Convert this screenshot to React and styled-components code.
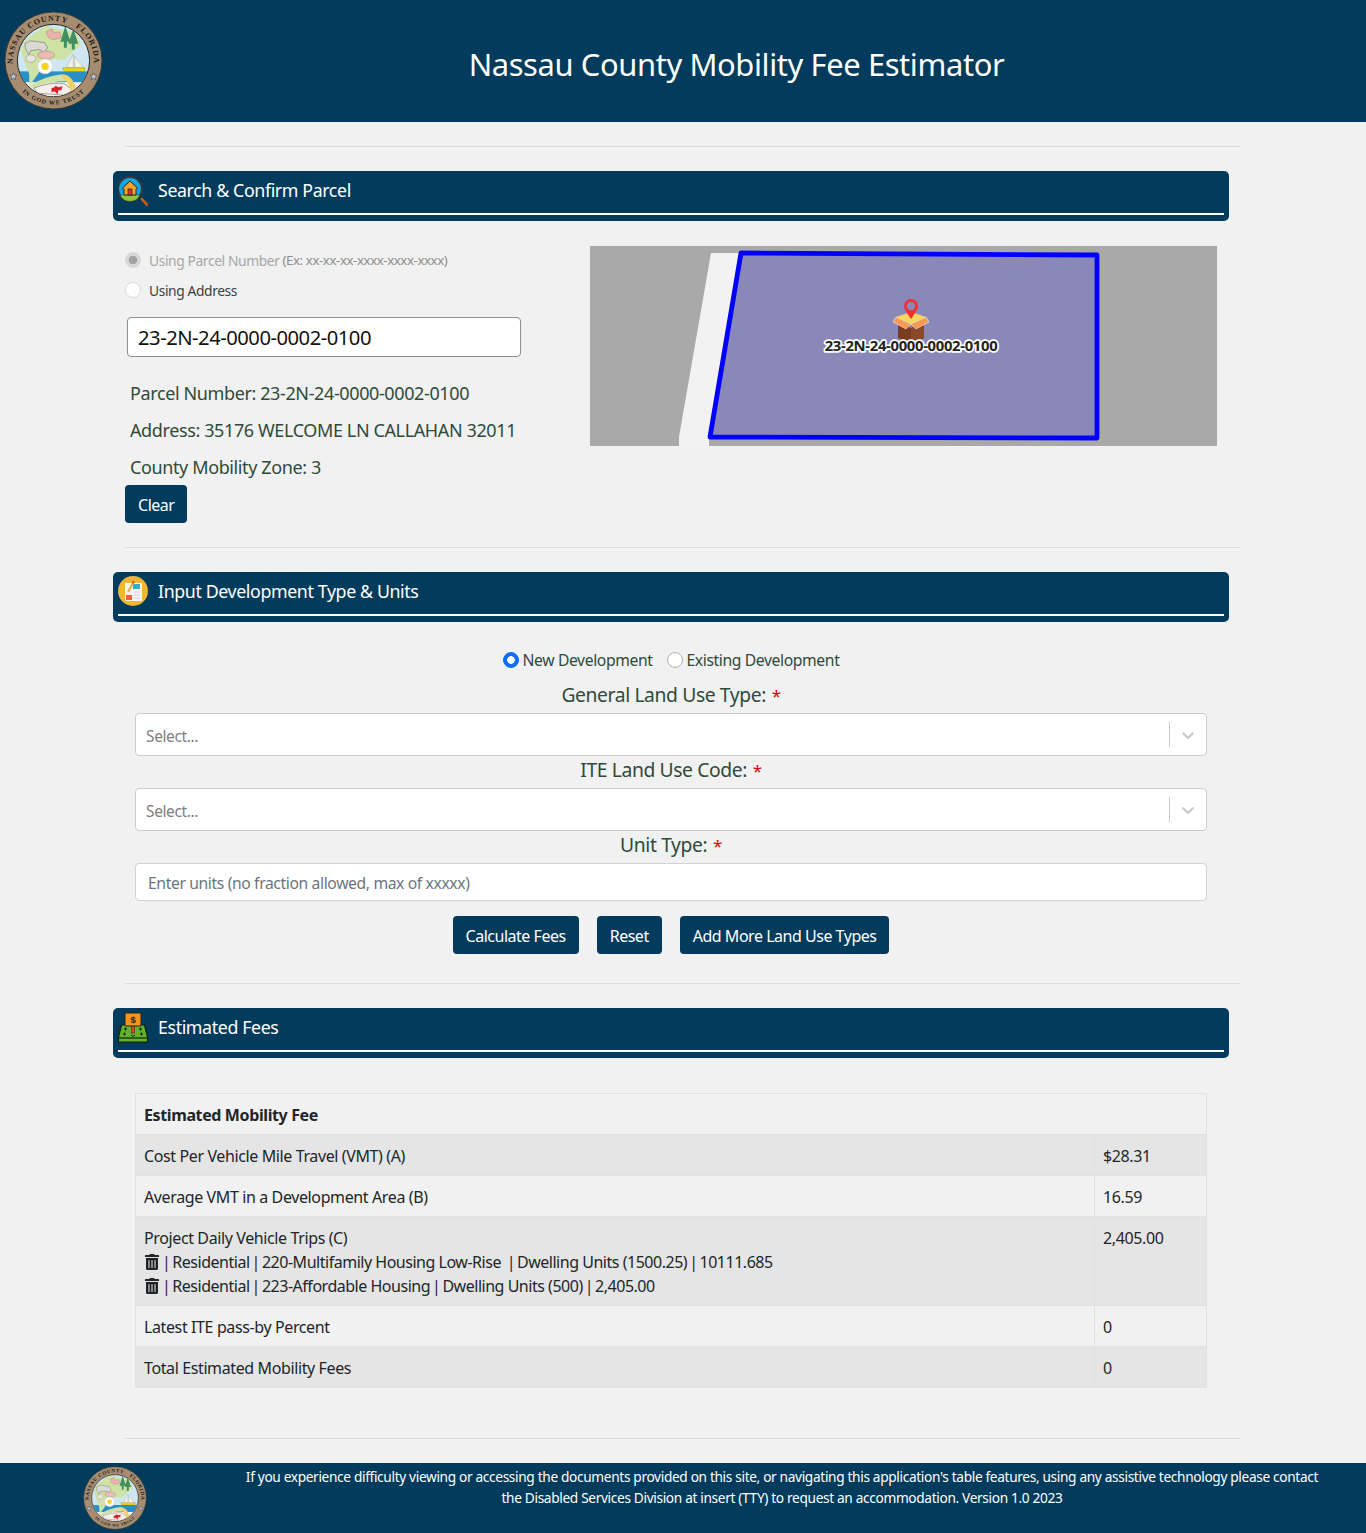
import React from 'react';
import styled, { createGlobalStyle } from 'styled-components';
import { FaTrashAlt } from 'react-icons/fa';

const NAVY = '#033b5c';
const FONT = '"Noto Sans", "Open Sans", sans-serif';

const GlobalStyle = createGlobalStyle`
  html, body {
    margin: 0;
    padding: 0;
    background: #f1f1f1;
    font-family: ${FONT};
    font-size: 16px;
    letter-spacing: -0.024em;
    color: #212529;
  }
  * { box-sizing: border-box; }
`;

const Header = styled.header`
  height: 122px;
  background: ${NAVY};
  display: flex;
  align-items: center;
  padding: 0 0 0 4px;
`;

const HeaderSeal = styled.div`
  width: 99px;
  height: 99px;
  margin-top: -1px;
`;

const Title = styled.h1`
  flex: 1;
  margin: 5px 0 0 4px;
  text-align: center;
  color: #fff;
  font-size: 30.9px;
  font-weight: 400;
  line-height: 40px;
`;

const Main = styled.main`
  width: 1115px;
  margin-left: 125px;
`;

const Rule = styled.hr`
  margin: 24px 0;
  height: 1px;
  border: 0;
  background: #dcdcdc;
`;

const Bar = styled.div`
  width: 1116px;
  height: 50px;
  margin-left: -12px;
  padding: 0 5px;
  background: ${NAVY};
  border-radius: 5px;
  display: flex;
  flex-direction: column;
`;

const BarRow = styled.div`
  height: 38px;
  margin-bottom: 4px;
  display: flex;
  align-items: center;
  gap: 10px;
  color: #fff;
  font-size: 17.8px;
`;

const BarIcon = styled.svg`
  width: 30px;
  height: 32px;
  flex: none;
`;

const BarLine = styled.div`
  height: 2px;
  background: #fff;
`;

const ParcelGrid = styled.div`
  display: flex;
  justify-content: space-between;
  width: 1092px;
  margin-top: 25px;
`;

const ParcelForm = styled.div`
  width: 400px;
  margin-top: -1px;
`;

const RadioRow = styled.label`
  display: flex;
  align-items: center;
  height: 30px;
  font-size: 13.8px;
  color: ${p => (p.$muted ? '#a6a6a6' : '#3a3f44')};
`;

const RadioInput = styled.input`
  appearance: none;
  width: 16px;
  height: 16px;
  margin: 0 8px 0 0;
  border-radius: 50%;
  border: 1px solid #d9dcdf;
  background: #fff;
  flex: none;

  &:checked {
    background: radial-gradient(circle, #fff 0 3.6px, transparent 4px), #0d6efd;
    border-color: #0d6efd;
  }
  &:disabled:checked {
    background: radial-gradient(circle, #a3a3a3 0 4px, #d8d8d8 4.6px);
    border-color: #d8d8d8;
  }
`;

const Hint = styled.span`
  margin-left: 3px;
  font-size: 13.2px;
  color: #8d8d8d;
`;

const ParcelInput = styled.input`
  display: block;
  width: 394px;
  height: 40px;
  margin: 12px 0 0 2px;
  padding: 0 10px;
  border: 1px solid #8f8f8f;
  border-radius: 4px;
  background: #fff;
  font-family: ${FONT};
  font-size: 20.2px;
  letter-spacing: -0.024em;
  color: #111;
`;

const Facts = styled.div`
  margin: 18px 0 0 5px;
`;

const Fact = styled.p`
  margin: 0;
  height: 37px;
  line-height: 37px;
  font-size: 18px;
  white-space: nowrap;
  color: #2f4a3a;
`;

const Button = styled.button`
  height: 38px;
  padding: 2px 13px 0;
  border: 0;
  border-radius: 4px;
  background: ${NAVY};
  color: #fff;
  font-family: ${FONT};
  font-size: 16px;
  letter-spacing: -0.03em;
`;

const ClearButton = styled(Button)`
  display: block;
  margin-top: -1px;
  width: 62px;
`;

const MapFrame = styled.svg`
  display: block;
  width: 627px;
  height: 200px;
  flex: none;
`;

const DevForm = styled.div`
  width: 1072px;
  margin: 26px 0 0 10px;
  display: flex;
  flex-direction: column;
  align-items: center;
`;

const RadioLine = styled.div`
  display: flex;
  justify-content: center;
  gap: 14px;
  height: 33px;
  padding-bottom: 9px;
`;

const DevRadio = styled.label`
  display: flex;
  align-items: center;
  font-size: 15.7px;
  color: #2f4a3a;

  ${RadioInput} {
    margin-right: 4px;
    border-color: #adb2b7;
  }
  ${RadioInput}:checked {
    border-color: #0d6efd;
  }
`;

const FieldLabel = styled.div`
  height: 33px;
  padding-top: 1px;
  line-height: 28px;
  font-size: 19.3px;
  color: #2f4a3a;
  margin-top: ${p => (p.$first ? '-1px' : '0')};
`;

const Star = styled.span`
  margin-left: 1px;
  font-size: 17px;
  color: #e00000;
`;

const SelectBox = styled.div`
  width: 100%;
  height: 43px;
  display: flex;
  align-items: center;
  padding-left: 10px;
  background: #fff;
  border: 1px solid #ccc;
  border-radius: 4px;
  color: #808080;
  font-size: 15.5px;
  margin-bottom: -1px;
`;

const SelectValue = styled.div`
  flex: 1;
  padding-top: 2px;
`;

const SelectDivider = styled.span`
  width: 1px;
  height: 25px;
  background: #ccc;
`;

const Chevron = styled.svg`
  width: 20px;
  height: 20px;
  margin: 0 8px;
  fill: #ccc;
`;

const UnitInput = styled.input`
  width: 100%;
  height: 38px;
  padding: 2px 12px 0;
  background: #fff;
  border: 1px solid #ced4da;
  border-radius: 4px;
  font-family: ${FONT};
  font-size: 15.7px;
  letter-spacing: -0.024em;

  &::placeholder { color: #6c757d; opacity: 1; }
`;

const ButtonRow = styled.div`
  display: flex;
  gap: 18px;
  margin: 15px 0 5px;
`;

const FeeTable = styled.table`
  width: 1072px;
  margin: 35px 0 50px 10px;
  border-collapse: collapse;
  font-size: 16px;
  color: #212529;
`;

const Row = styled.tr`
  background: ${p => (p.$striped ? '#e5e5e5' : 'transparent')};
`;

const Cell = styled.td`
  padding: 9px 8px 7px;
  border: 1px solid #dee2e6;
  line-height: 24px;
  vertical-align: top;
  width: ${p => p.$width || 'auto'};
  font-weight: ${p => (p.$bold ? 700 : 400)};
`;

const TripLine = styled.div`
  white-space: pre;
  letter-spacing: -0.03em;

  svg { vertical-align: -2px; }
`;

const Pipe = styled.span`
  margin: 0 -1.7px;
`;

const Footer = styled.footer`
  height: 70px;
  background: ${NAVY};
  display: flex;
  padding-left: 83px;
  color: #fff;
`;

const FooterSeal = styled.div`
  width: 64px;
  height: 64px;
  margin-top: 3px;
  flex: none;
`;

const FooterText = styled.p`
  width: 1090px;
  margin: 3px 0 0 90px;
  text-align: center;
  font-size: 13.7px;
  line-height: 21px;
  letter-spacing: -0.025em;
`;

const Seal = ({ id }) => (
  <svg viewBox="0 0 100 100" width="100%" height="100%">
    <defs>
      <path id={`${id}-top`} d="M 9.6 58 A 41 41 0 1 1 90.4 58" />
      <path id={`${id}-bottom`} d="M 18 81 A 44.5 44.5 0 0 0 82 81" />
      <clipPath id={`${id}-clip`}>
        <circle cx="50" cy="50" r="36" />
      </clipPath>
    </defs>
    <circle cx="50" cy="50" r="49" fill="#a68c70" stroke="#3b3a36" strokeWidth="1" />
    <circle cx="50" cy="50" r="36.5" fill="#cfe6f3" stroke="#222" strokeWidth="1" />
    <g clipPath={`url(#${id}-clip)`}>
      <rect x="10" y="61" width="80" height="11" fill="#2a8fc4" />
      <rect x="10" y="72" width="80" height="20" fill="#f4f2ee" />
      <path d="M22 29 L41 15 L73 22 L78 34 L61 49 L48 49 L36 61 L25.5 76 L25.5 64 L20 49 L17 39 Z" fill="#cfe2a6" />
      <path d="M25.5 76 Q40 66 59 64 L62 71 Q42 71 30 78 Z" fill="#cfe2a6" />
      <path d="M30 78 Q44 72 60 73 L70 80 L60 85 L34 83 Z" fill="#f3efea" stroke="#7a5f58" strokeWidth="0.6" />
      <path d="M59 64 Q70 65 73 80 L67 80 Q65 71 59.5 69 Z" fill="#efd36a" />
      <path d="M48 78 L51 77 L52 75.5 L55 77 L59 76 L58 80 L55 80 L54 84 L51 81 L48 82 Z" fill="#d81f2a" />
      <path d="M42.5 21 L48 18 L51 22 L56 21 L58 27 L50 29 L45 27 Z" fill="#eab3ae" stroke="#97716d" strokeWidth="0.4" />
      <path d="M62 15 L57 31 L60.5 31 L60.5 37 L63.5 37 L63.5 31 L67 31 Z M70 18 L65 33 L68.5 33 L68.5 39 L71.5 39 L71.5 33 L75 33 Z" fill="#3f8f62" />
      <path d="M21 33 L27 30 L41 32 L44 37 L40 43 L37 39 L27 40 L25 44 L22 39 Z" fill="#d9d9d5" stroke="#555" strokeWidth="0.5" />
      <ellipse cx="42.5" cy="44.5" rx="8.5" ry="4" fill="#ecbcb4" stroke="#8b6c66" strokeWidth="0.4" />
      <ellipse cx="27" cy="48" rx="5" ry="3.8" fill="#e8e5df" stroke="#777" strokeWidth="0.4" />
      <circle cx="41.5" cy="56" r="7.5" fill="#fff" stroke="#cfcfcf" strokeWidth="1" strokeDasharray="2 1" />
      <circle cx="41.5" cy="56" r="3.7" fill="#f4d51f" />
      <path d="M70 44 L70 57 L63 57 Z M71.5 46 L80 57 L71.5 57 Z" fill="#f5f3e8" stroke="#777" strokeWidth="0.3" />
      <path d="M59 57.5 L82 57.5 L81 61 L61 61 Z" fill="#f5d90e" stroke="#444" strokeWidth="0.3" />
    </g>
    <path d="M9.5 62.5 l1.1 2.3 2.5 .3 -1.8 1.7 .5 2.5 -2.3 -1.2 -2.2 1.2 .4 -2.5 -1.8 -1.7 2.5 -.3z" fill="#b8c7dc" stroke="#333" strokeWidth="0.5" />
    <path d="M90.5 62.5 l1.1 2.3 2.5 .3 -1.8 1.7 .5 2.5 -2.3 -1.2 -2.2 1.2 .4 -2.5 -1.8 -1.7 2.5 -.3z" fill="#b8c7dc" stroke="#333" strokeWidth="0.5" />
    <text fontFamily='"Liberation Serif", serif' fontWeight="700" fontSize="8" letterSpacing="0.95" fill="#1c1a16">
      <textPath href={`#${id}-top`} startOffset="50%" textAnchor="middle">{'NASSAU COUNTY\u00a0\u00a0\u00a0FLORIDA'}</textPath>
    </text>
    <text fontFamily='"Liberation Serif", serif' fontWeight="700" fontSize="6.2" letterSpacing="0.9" fill="#1c1a16">
      <textPath href={`#${id}-bottom`} startOffset="50%" textAnchor="middle">IN GOD WE TRUST</textPath>
    </text>
  </svg>
);

const SearchHouseIcon = () => (
  <BarIcon viewBox="0 0 30 32">
    <path d="M20 22 L24 26" stroke="#1b1b1b" strokeWidth="2" />
    <path d="M23.7 25 L29.5 31" stroke="#c05a20" strokeWidth="2.6" strokeLinecap="round" />
    <circle cx="12" cy="15" r="12" fill="#12a6e6" stroke="#34383d" strokeWidth="2.2" />
    <path d="M2 21 H22 A11 11 0 0 1 2 21 Z" fill="#8cc63f" stroke="#1b1b1b" strokeWidth="0.4" />
    <path d="M12 7 L19.5 14 L18 15.5 V21 H6 V15.5 L4.5 14 Z" fill="#f6a524" stroke="#222" strokeWidth="1" />
    <rect x="10" y="15" width="4" height="6" fill="#d9352b" stroke="#222" strokeWidth="0.7" />
  </BarIcon>
);

const FormIcon = () => (
  <BarIcon viewBox="0 0 30 32">
    <circle cx="15" cy="16" r="15" fill="#f1b733" />
    <rect x="7" y="8" width="17" height="18" fill="#f4f4f0" />
    <rect x="15" y="9" width="7" height="5" fill="#29b1c4" />
    <rect x="8" y="20" width="6" height="5" fill="#f0603a" />
    <path d="M10 17 L15 8" stroke="#e0b04a" strokeWidth="2.2" />
    <path d="M14.6 8.6 L16 6" stroke="#d85a50" strokeWidth="2.2" />
    <path d="M16 17 H22 M16 20 H22 M16 23 H22" stroke="#d2d2d2" strokeWidth="1" />
  </BarIcon>
);

const LandFeeIcon = () => (
  <BarIcon viewBox="0 0 30 32">
    <path d="M3.5 14 H26.5 L29.5 26 V31 H0.5 V26 Z" fill="#62b32c" stroke="#10240a" strokeWidth="1.2" />
    <path d="M0.5 27 H29.5" stroke="#10240a" strokeWidth="1.2" />
    <rect x="13.5" y="14" width="3" height="8" fill="#e5402a" stroke="#222" strokeWidth="0.5" />
    <rect x="7" y="2" width="16" height="13" rx="1" fill="#f7941d" stroke="#222" strokeWidth="1" />
    <text x="15" y="12" textAnchor="middle" fontSize="9.5" fontWeight="700" fontFamily='"Liberation Sans", sans-serif' fill="#222">$</text>
    <path d="M6 18 h3 M7.5 16.5 v3 M21 18 h3 M22.5 16.5 v3 M5 23 h3 M6.5 21.5 v3 M22 23 h3 M23.5 21.5 v3 M13 24 l2 1.5 l2 -1.5" stroke="#10240a" strokeWidth="1" fill="none" />
  </BarIcon>
);

const ParcelMap = () => (
  <MapFrame viewBox="0 0 627 200">
    <rect width="627" height="200" fill="#a9a9a9" />
    <path d="M121 7 H152 L119 191 V200 H89 V191 Z" fill="#f2f2f2" />
    <path d="M151 7 L507 9 L507 192 L120 191 Z" fill="#8a88b9" stroke="#0000ff" strokeWidth="4.8" strokeLinejoin="round" />
    <path d="M321 78 L306 71 L321 66 L336 71 Z" fill="#f6d65b" />
    <path d="M308 76 L321 82 V94 H312 L308 92 Z" fill="#7a3d22" />
    <path d="M334 76 L321 82 V94 H330 L334 92 Z" fill="#8a4a2a" />
    <path d="M306 71 L321 78 L316 83 L303 76 Z M336 71 L321 78 L326 83 L339 76 Z" fill="#f49a53" stroke="#fff" strokeWidth="0.5" />
    <path d="M321 73 C316 66 314 62 314 60 A7 7 0 1 1 328 60 C328 62 326 66 321 73 Z" fill="#ef3030" />
    <circle cx="321" cy="60" r="4.2" fill="#8a88b9" />
    <text x="321" y="105" textAnchor="middle" fontFamily='"Noto Sans", sans-serif' fontSize="14.8" fontWeight="700" letterSpacing="-0.3" fill="#222" stroke="#fff" strokeWidth="3.5" paintOrder="stroke" strokeLinejoin="round">23-2N-24-0000-0002-0100</text>
  </MapFrame>
);

const Dropdown = () => (
  <SelectBox>
    <SelectValue>Select...</SelectValue>
    <SelectDivider />
    <Chevron viewBox="0 0 20 20">
      <path d="M4.516 7.548c.436-.446 1.043-.481 1.576 0L10 11.295l3.908-3.747c.533-.481 1.141-.446 1.574 0 .436.445.408 1.197 0 1.615-.406.418-4.695 4.502-4.695 4.502a1.095 1.095 0 0 1-1.576 0S4.924 9.581 4.516 9.163c-.409-.418-.436-1.17 0-1.615z" />
    </Chevron>
  </SelectBox>
);

const SectionBar = ({ icon, title }) => (
  <Bar>
    <BarRow>
      {icon}
      {title}
    </BarRow>
    <BarLine />
  </Bar>
);

const App = () => (
  <>
    <GlobalStyle />
    <Header>
      <HeaderSeal>
        <Seal id="seal-head" />
      </HeaderSeal>
      <Title>Nassau County Mobility Fee Estimator</Title>
    </Header>
    <Main>
      <Rule />
      <SectionBar icon={<SearchHouseIcon />} title="Search & Confirm Parcel" />
      <ParcelGrid>
        <ParcelForm>
          <RadioRow $muted>
            <RadioInput type="radio" name="mode" defaultChecked disabled />
            Using Parcel Number
            <Hint>(Ex: xx-xx-xx-xxxx-xxxx-xxxx)</Hint>
          </RadioRow>
          <RadioRow>
            <RadioInput type="radio" name="mode" />
            Using Address
          </RadioRow>
          <ParcelInput defaultValue="23-2N-24-0000-0002-0100" />
          <Facts>
            <Fact>Parcel Number: 23-2N-24-0000-0002-0100</Fact>
            <Fact>Address: 35176 WELCOME LN CALLAHAN 32011</Fact>
            <Fact>County Mobility Zone: 3</Fact>
          </Facts>
          <ClearButton>Clear</ClearButton>
        </ParcelForm>
        <ParcelMap />
      </ParcelGrid>
      <Rule />
      <SectionBar icon={<FormIcon />} title="Input Development Type & Units" />
      <DevForm>
        <RadioLine>
          <DevRadio>
            <RadioInput type="radio" name="dev" defaultChecked />
            New Development
          </DevRadio>
          <DevRadio>
            <RadioInput type="radio" name="dev" />
            Existing Development
          </DevRadio>
        </RadioLine>
        <FieldLabel $first>General Land Use Type: <Star>*</Star></FieldLabel>
        <Dropdown />
        <FieldLabel>ITE Land Use Code: <Star>*</Star></FieldLabel>
        <Dropdown />
        <FieldLabel>Unit Type: <Star>*</Star></FieldLabel>
        <UnitInput placeholder="Enter units (no fraction allowed, max of xxxxx)" />
        <ButtonRow>
          <Button>Calculate Fees</Button>
          <Button>Reset</Button>
          <Button>Add More Land Use Types</Button>
        </ButtonRow>
      </DevForm>
      <Rule />
      <SectionBar icon={<LandFeeIcon />} title="Estimated Fees" />
      <FeeTable>
        <tbody>
          <Row>
            <Cell colSpan={2} $bold>Estimated Mobility Fee</Cell>
          </Row>
          <Row $striped>
            <Cell>Cost Per Vehicle Mile Travel (VMT) (A)</Cell>
            <Cell $width="112px">$28.31</Cell>
          </Row>
          <Row>
            <Cell>Average VMT in a Development Area (B)</Cell>
            <Cell>16.59</Cell>
          </Row>
          <Row $striped>
            <Cell>
              Project Daily Vehicle Trips (C)
              <TripLine>
                <FaTrashAlt size={16} color="#212529" /> <Pipe>|</Pipe> Residential <Pipe>|</Pipe> 220-Multifamily Housing Low-Rise  <Pipe>|</Pipe> Dwelling Units (1500.25) <Pipe>|</Pipe> 10111.685
              </TripLine>
              <TripLine>
                <FaTrashAlt size={16} color="#212529" /> <Pipe>|</Pipe> Residential <Pipe>|</Pipe> 223-Affordable Housing <Pipe>|</Pipe> Dwelling Units (500) <Pipe>|</Pipe> 2,405.00
              </TripLine>
            </Cell>
            <Cell>2,405.00</Cell>
          </Row>
          <Row>
            <Cell>Latest ITE pass-by Percent</Cell>
            <Cell>0</Cell>
          </Row>
          <Row $striped>
            <Cell>Total Estimated Mobility Fees</Cell>
            <Cell>0</Cell>
          </Row>
        </tbody>
      </FeeTable>
      <Rule />
    </Main>
    <Footer>
      <FooterSeal>
        <Seal id="seal-foot" />
      </FooterSeal>
      <FooterText>
        If you experience difficulty viewing or accessing the documents provided on this site, or navigating this application's table features, using any assistive technology please contact the Disabled Services Division at insert (TTY) to request an accommodation. Version 1.0 2023
      </FooterText>
    </Footer>
  </>
);

export default App;
